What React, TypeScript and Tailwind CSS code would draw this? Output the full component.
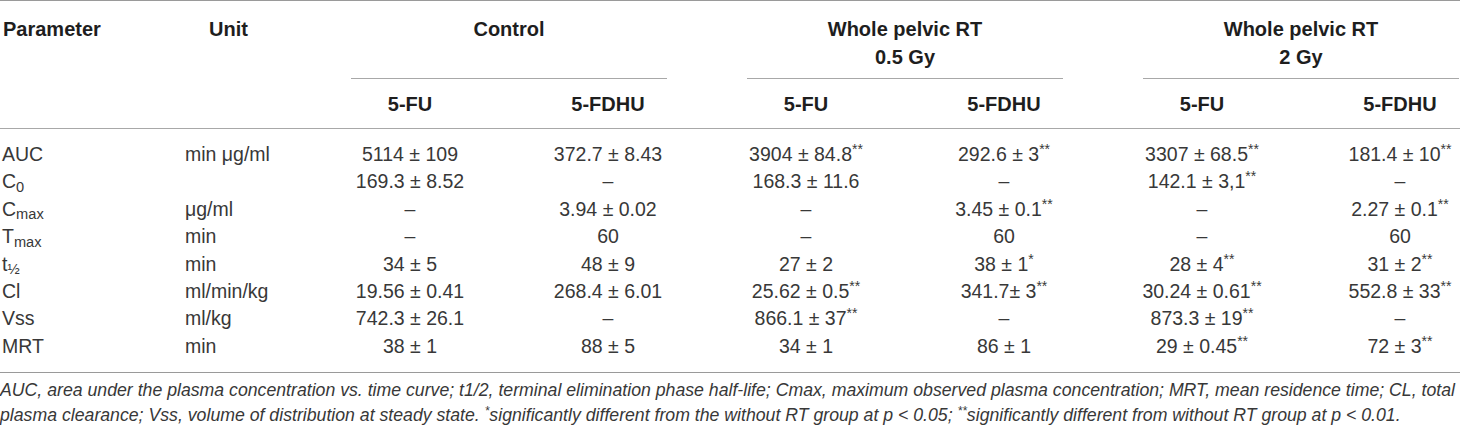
const font = { fontFamily: '"Liberation Sans", Arial, sans-serif' };

type Row = { param: React.ReactNode; unit: string; vals: [string, string?][] };

const rows: Row[] = [
  { param: 'AUC', unit: 'min μg/ml', vals: [['5114 ± 109'], ['372.7 ± 8.43'], ['3904 ± 84.8', '**'], ['292.6 ± 3', '**'], ['3307 ± 68.5', '**'], ['181.4 ± 10', '**']] },
  { param: <>C<sub>0</sub></>, unit: '', vals: [['169.3 ± 8.52'], ['–'], ['168.3 ± 11.6'], ['–'], ['142.1 ± 3,1', '**'], ['–']] },
  { param: <>C<sub>max</sub></>, unit: 'μg/ml', vals: [['–'], ['3.94 ± 0.02'], ['–'], ['3.45 ± 0.1', '**'], ['–'], ['2.27 ± 0.1', '**']] },
  { param: <>T<sub>max</sub></>, unit: 'min', vals: [['–'], ['60'], ['–'], ['60'], ['–'], ['60']] },
  { param: <>t<sub>½</sub></>, unit: 'min', vals: [['34 ± 5'], ['48 ± 9'], ['27 ± 2'], ['38 ± 1', '*'], ['28 ± 4', '**'], ['31 ± 2', '**']] },
  { param: 'Cl', unit: 'ml/min/kg', vals: [['19.56 ± 0.41'], ['268.4 ± 6.01'], ['25.62 ± 0.5', '**'], ['341.7± 3', '**'], ['30.24 ± 0.61', '**'], ['552.8 ± 33', '**']] },
  { param: 'Vss', unit: 'ml/kg', vals: [['742.3 ± 26.1'], ['–'], ['866.1 ± 37', '**'], ['–'], ['873.3 ± 19', '**'], ['–']] },
  { param: 'MRT', unit: 'min', vals: [['38 ± 1'], ['88 ± 5'], ['34 ± 1'], ['86 ± 1'], ['29 ± 0.45', '**'], ['72 ± 3', '**']] },
];

const GroupHead = ({ children }: { children: React.ReactNode }) => (
  <th colSpan={2} className="p-0 align-top font-bold">
    <div className="mx-[40px] border-b border-[#a8a8a8] pt-[14px] pb-[8px] h-[78px] leading-[28px]">{children}</div>
  </th>
);

export default function App() {
  return (
    <div className="w-full overflow-hidden bg-white text-[#383838]" style={font}>
      <table className="table-fixed border-collapse w-[1499px]">
        <colgroup>
          <col className="w-[185px]" />
          <col className="w-[126px]" />
          <col className="w-[198px]" />
          <col className="w-[198px]" />
          <col className="w-[198px]" />
          <col className="w-[198px]" />
          <col className="w-[198px]" />
          <col className="w-[198px]" />
        </colgroup>
        <thead className="text-[20px] text-[#1e1e1e]">
          <tr className="border-t border-[#9a9a9a]">
            <th rowSpan={2} className="p-0 pl-[3px] pt-[14px] align-top text-left font-bold leading-[28px]">Parameter</th>
            <th rowSpan={2} className="p-0 pl-[24px] pt-[14px] align-top text-left font-bold leading-[28px]">Unit</th>
            <GroupHead>Control</GroupHead>
            <GroupHead>Whole pelvic RT<br />0.5 Gy</GroupHead>
            <GroupHead>Whole pelvic RT<br />2 Gy</GroupHead>
          </tr>
          <tr className="border-b border-[#a8a8a8]">
            {['5-FU', '5-FDHU', '5-FU', '5-FDHU', '5-FU', '5-FDHU'].map((h, i) => (
              <th key={i} className="p-0 pt-[11px] pb-[10px] leading-[28px] text-center font-bold">{h}</th>
            ))}
          </tr>
        </thead>
        <tbody className="text-[19.5px] leading-[27.4px]">
          {rows.map((r, i) => (
            <tr key={i} className={i === rows.length - 1 ? 'border-b border-[#9a9a9a]' : ''}>
              <td className={`p-0 pl-[2px] ${i === 0 ? 'pt-[12px]' : ''} ${i === rows.length - 1 ? 'pb-[12px]' : ''}`}>{r.param}</td>
              <td className={`p-0 ${i === 0 ? 'pt-[12px]' : ''} ${i === rows.length - 1 ? 'pb-[12px]' : ''}`}>{r.unit}</td>
              {r.vals.map(([v, s], j) => (
                <td key={j} className={`p-0 text-center ${i === 0 ? 'pt-[12px]' : ''} ${i === rows.length - 1 ? 'pb-[12px]' : ''}`}>
                  {v}
                  {s && <sup className="text-[14px] top-[-0.5em]">{s}</sup>}
                </td>
              ))}
            </tr>
          ))}
        </tbody>
      </table>
      <p className="pt-[5px] text-[17.7px] italic leading-[24.5px] text-[#383838]">
        AUC, area under the plasma concentration vs. time curve; t1/2, terminal elimination phase half-life; Cmax, maximum observed plasma concentration; MRT, mean residence time; CL, total
        <br />
        plasma clearance; Vss, volume of distribution at steady state. <sup className="text-[12px]">*</sup>significantly different from the without RT group at p &lt; 0.05; <sup className="text-[12px]">**</sup>significantly different from without RT group at p &lt; 0.01.
      </p>
    </div>
  );
}
